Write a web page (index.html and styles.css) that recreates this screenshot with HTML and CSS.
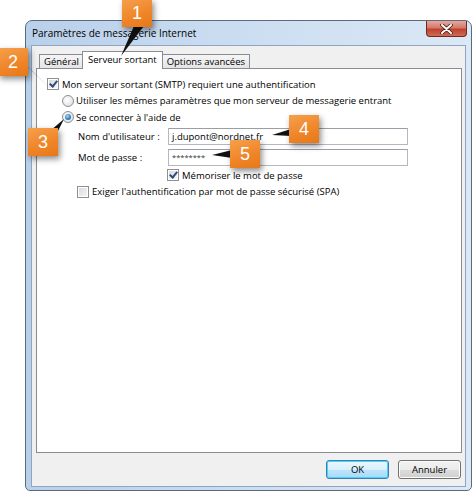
FILE: index.html
```html
<!DOCTYPE html>
<html lang="fr">
<head>
    <meta charset="UTF-8">
    <title>Paramètres de messagerie Internet</title>
    <link rel="stylesheet" href="styles.css">
</head>
<body>
    <div class="window">
        <div class="titlebar">
            <span class="title">Paramètres de messagerie Internet</span>
            <span class="close">
                <svg width="13" height="10" viewBox="0 0 13 10">
                    <path d="M2 1 L11 9 M11 1 L2 9" stroke="#4a1a14" stroke-width="3.6" stroke-linecap="round"/>
                    <path d="M2 1 L11 9 M11 1 L2 9" stroke="#fff" stroke-width="2" stroke-linecap="round"/>
                </svg>
            </span>
        </div>
        <div class="client">
            <div class="tabs">
                <div class="tab">Général</div>
                <div class="tab active">Serveur sortant</div>
                <div class="tab">Options avancées</div>
            </div>
            <div class="panel">
                <div class="row">
                    <span class="check checked"></span>
                    Mon serveur sortant (SMTP) requiert une authentification
                </div>
                <div class="row level1">
                    <span class="radio"></span>
                    Utiliser les mêmes paramètres que mon serveur de messagerie entrant
                </div>
                <div class="row level1">
                    <span class="radio on"></span>
                    Se connecter à l'aide de
                </div>
                <div class="field">
                    <label>Nom d'utilisateur :</label>
                    <div class="input">j.dupont@nordnet.fr</div>
                </div>
                <div class="field">
                    <label>Mot de passe :</label>
                    <div class="input secret">********</div>
                </div>
                <div class="row remember">
                    <span class="check checked"></span>
                    Mémoriser le mot de passe
                </div>
                <div class="row level2">
                    <span class="check"></span>
                    Exiger l'authentification par mot de passe sécurisé (SPA)
                </div>
            </div>
            <div class="buttons">
                <button class="btn default">OK</button>
                <button class="btn">Annuler</button>
            </div>
        </div>
    </div>

    <!-- repères numérotés -->
    <svg class="pointers" width="474" height="493">
        <polygon points="134,26 144,26 121,56"/>
        <polygon points="24,63 30,69 53,91"/>
        <polygon points="50,131 58,131 64,119"/>
        <polygon points="291,129 291,136 272,135"/>
        <polygon points="232,150 232,158 212,155"/>
    </svg>
    <div class="callout c1">1</div>
    <div class="callout c2">2</div>
    <div class="callout c3">3</div>
    <div class="callout c4">4</div>
    <div class="callout c5">5</div>
</body>
</html>
```

FILE: styles.css
```css
:root {
    --frame-border: #5b6b7c;
    --client-bg: #f0f0f0;
    --tab-border: #898c95;
    --text-color: #000;
    --orange: #ef8427;
}

body {
    margin: 0;
    width: 474px;
    height: 493px;
    padding: 20px 2px 2px 25px;
    box-sizing: border-box;
    overflow: hidden;
    background: #fff;
    font-family: "Open Sans", "Noto Sans", sans-serif;
    font-size: 9.5px;
    color: var(--text-color);
    position: relative;
}

.window {
    height: 100%;
    box-sizing: border-box;
    border: 1px solid var(--frame-border);
    border-radius: 7px 7px 5px 5px;
    background: linear-gradient(to right, #b9d0ea, #cfe0f2 60%, #dbe8f5);
    padding: 0 5px 3px 5px;
    display: flex;
    flex-direction: column;
}

.titlebar {
    height: 24px;
    display: flex;
    justify-content: space-between;
    align-items: flex-start;
}

.title {
    padding-left: 1px;
    line-height: 24px;
    font-size: 10px;
}

.close {
    width: 41px;
    height: 16px;
    margin-right: -1px;
    box-sizing: border-box;
    border: 1px solid #6e2a20;
    border-top: none;
    border-radius: 0 0 4px 4px;
    background: linear-gradient(#e6a89c 0%, #d47a6b 45%, #c0412f 55%, #d06a56 100%);
    display: flex;
    justify-content: center;
    align-items: center;
}

.client {
    flex: 1;
    border: 1px solid #8ea6c2;
    background: var(--client-bg);
    padding: 5px 3px 7px 4px;
    display: flex;
    flex-direction: column;
}

.tabs {
    height: 17px;
    display: flex;
    align-items: flex-end;
    padding-left: 3px;
}

.tab {
    height: 14px;
    line-height: 13px;
    padding: 0 4px;
    border: 1px solid var(--tab-border);
    border-bottom: none;
    box-sizing: border-box;
    background: linear-gradient(#f6f6f6, #e4e4e4);
    margin-right: -1px;
}

.tab.active {
    height: 18px;
    line-height: 16px;
    margin: 0 -1px -1px -1px;
    padding: 0 5px;
    background: #fff;
    position: relative;
    z-index: 1;
}

.panel {
    flex: 1;
    background: #fff;
    border: 1px solid var(--tab-border);
    padding: 7px 10px 0 10px;
}

.row {
    height: 16.5px;
    display: flex;
    align-items: center;
    gap: 3px;
    white-space: nowrap;
}

.row.level1 {
    padding-left: 15px;
    gap: 2px;
}

.row.level2 {
    padding-left: 30px;
}

.row.remember {
    padding-left: 120px;
    height: 17px;
}

.check {
    width: 12px;
    height: 12px;
    box-sizing: border-box;
    border: 1px solid #8f8f8f;
    background: linear-gradient(135deg, #d4d7dc, #f8f8f8);
    box-shadow: inset 0 0 0 1px #fff;
    flex: none;
    position: relative;
}

.check.checked::after {
    content: "";
    position: absolute;
    left: 3px;
    top: 0px;
    width: 3px;
    height: 6px;
    border-right: 2px solid #2c4a7a;
    border-bottom: 2px solid #2c4a7a;
    transform: rotate(40deg);
}

.radio {
    width: 12px;
    height: 12px;
    box-sizing: border-box;
    border-radius: 50%;
    border: 1px solid #8f8f8f;
    background: radial-gradient(circle at 40% 40%, #ffffff, #d6d9de);
    flex: none;
    position: relative;
}

.radio.on::after {
    content: "";
    position: absolute;
    left: 2px;
    top: 2px;
    width: 6px;
    height: 6px;
    border-radius: 50%;
    background: radial-gradient(circle at 40% 35%, #a7d6f5, #1d6fb2 70%, #11507f);
}

.field {
    display: flex;
    align-items: center;
    padding-left: 31px;
    margin-top: 2px;
    height: 18px;
}

.field + .field {
    margin-top: 3px;
}

.field label {
    width: 90px;
}

.input {
    width: 240px;
    height: 17px;
    box-sizing: border-box;
    border: 1px solid #b5b8bf;
    border-top-color: #9a9ea6;
    padding-left: 3px;
    line-height: 15px;
    background: #fff;
}

.input.secret {
    font-size: 7.5px;
    color: #333;
}

.buttons {
    display: flex;
    justify-content: flex-end;
    gap: 9px;
    margin-top: 7px;
    padding-right: 1px;
}

.btn {
    width: 63px;
    height: 19px;
    padding: 0;
    font-family: inherit;
    font-size: 9.5px;
    border: 1px solid #707070;
    border-radius: 3px;
    background: linear-gradient(#f2f2f2 0%, #ebebeb 50%, #dddddd 51%, #cfcfcf 100%);
    box-shadow: inset 0 0 0 1px #fcfcfc;
}

.btn.default {
    border-color: #3c7fb1;
    background: linear-gradient(#eaf6fd 0%, #d9f0fc 50%, #bee6fd 51%, #a7d9f5 100%);
    box-shadow: inset 0 0 0 1px #48d1ff;
}

.pointers {
    position: absolute;
    left: 0;
    top: 0;
    z-index: 2;
}

.pointers polygon {
    fill: #111;
}

.callout {
    position: absolute;
    z-index: 3;
    width: 30px;
    height: 28px;
    background: linear-gradient(160deg, #f6a04d, var(--orange) 60%, #e67818);
    box-shadow: 2px 3px 6px rgba(0, 0, 0, 0.45);
    color: #fff;
    font-family: "Liberation Sans", Arial, sans-serif;
    font-size: 18px;
    line-height: 28px;
    text-align: center;
}

.c1 { left: 122px; top: -1px; }
.c2 { left: -2px; top: 48px; }
.c3 { left: 28px; top: 128px; }
.c4 { left: 289px; top: 115px; }
.c5 { left: 230px; top: 140px; }
```
